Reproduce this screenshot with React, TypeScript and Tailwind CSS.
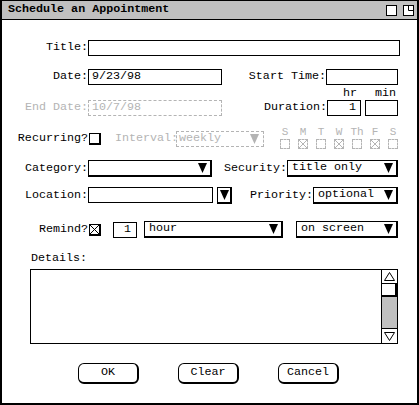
import React from "react";

function Tri({ gray }: { gray?: boolean }) {
  return (
    <svg width="9" height="10" viewBox="0 0 9 10" className="shrink-0">
      <polygon points="0,0 9,0 4.5,10" fill={gray ? "#b4b4b4" : "#000"} />
    </svg>
  );
}

function Drop({ w, text }: { w: string; text: string }) {
  return (
    <div className={`${w} h-[17px] flex items-center justify-between pl-[4px] pr-[3px] border border-black border-r-2 border-b-2 bg-white leading-none`}>
      <span>{text}</span>
      <Tri />
    </div>
  );
}

function Box({ x, gray }: { x?: boolean; gray?: boolean }) {
  if (gray) {
    return (
      <div className="w-[10px] h-[10px] border border-dashed border-[#b4b4b4] relative">
        {x && (
          <svg width="8" height="8" viewBox="0 0 8 8" className="absolute left-0 top-0">
            <line x1="0" y1="0" x2="8" y2="8" stroke="#b4b4b4" strokeWidth="1" />
            <line x1="8" y1="0" x2="0" y2="8" stroke="#b4b4b4" strokeWidth="1" />
          </svg>
        )}
      </div>
    );
  }
  return (
    <div className="w-[12px] h-[12px] border border-black border-r-2 border-b-2 relative bg-white">
      {x && (
        <svg width="9" height="9" viewBox="0 0 9 9" className="absolute left-0 top-0">
          <line x1="0" y1="0" x2="9" y2="9" stroke="#000" strokeWidth="1" />
          <line x1="9" y1="0" x2="0" y2="9" stroke="#000" strokeWidth="1" />
        </svg>
      )}
    </div>
  );
}

const days = [
  { l: "S", x: false },
  { l: "M", x: true },
  { l: "T", x: false },
  { l: "W", x: true },
  { l: "Th", x: false },
  { l: "F", x: true },
  { l: "S", x: false },
];

export default function App() {
  return (
    <div className="w-[419px] h-[405px] bg-white border-t border-x-2 border-b-2 border-black flex flex-col font-[family-name:'Liberation_Mono','Courier_New',monospace] text-[11.7px] text-black overflow-hidden">
      {/* title bar */}
      <div className="h-[19px] shrink-0 bg-[#c0c0c0] border-b border-black flex items-center justify-between pl-[6px] pr-[3px]">
        <span className="font-bold leading-none">Schedule an Appointment</span>
        <div className="flex items-center gap-[6px]">
          <svg width="11" height="11" viewBox="0 0 11 11">
            <rect x="0.5" y="0.5" width="10" height="10" fill="#fff" stroke="#000" />
          </svg>
          <svg width="11" height="11" viewBox="0 0 11 11">
            <rect x="0.5" y="0.5" width="10" height="10" fill="#fff" stroke="#000" />
            <polyline points="5.5,0.5 5.5,5.5 10.5,5.5" fill="none" stroke="#000" />
          </svg>
        </div>
      </div>

      {/* Title */}
      <div className="flex items-center h-[16px] mt-[20px]">
        <span className="w-[86px] text-right">Title:</span>
        <div className="w-[312px] h-[16px] border border-black" />
      </div>

      {/* Date / Start Time */}
      <div className="flex items-center h-[16px] mt-[13px]">
        <span className="w-[86px] text-right">Date:</span>
        <div className="w-[134px] h-[16px] border border-black flex items-center pl-[3px] leading-none">9/23/98</div>
        <span className="w-[104px] text-right">Start Time:</span>
        <div className="w-[72px] h-[16px] border border-black" />
      </div>

      {/* End Date / Duration */}
      <div className="flex items-end h-[26px] mt-[5px]">
        <span className="w-[86px] text-right text-[#b4b4b4] h-[16px] flex items-center justify-end">End Date:</span>
        <div className="w-[134px] h-[16px] border border-dashed border-[#b4b4b4] text-[#b4b4b4] flex items-center pl-[3px] leading-none">10/7/98</div>
        <span className="w-[105px] text-right h-[16px] flex items-center justify-end">Duration:</span>
        <div className="flex flex-col">
          <div className="flex h-[10px] items-end leading-none">
            <span className="w-[34px] text-right pr-[4px]">hr</span>
            <span className="w-[4px]" />
            <span className="w-[33px] text-right pr-[2px]">min</span>
          </div>
          <div className="flex gap-[4px]">
            <div className="w-[34px] h-[16px] border border-black flex items-center justify-end pr-[4px] leading-none">1</div>
            <div className="w-[33px] h-[16px] border border-black" />
          </div>
        </div>
      </div>

      {/* Recurring */}
      <div className="flex items-start h-[22px] mt-[11px]">
        <span className="w-[86px] text-right mt-[4px] h-[16px] flex items-center justify-end">Recurring?</span>
        <div className="ml-[1px] mt-[6px]">
          <Box />
        </div>
        <span className="ml-[14px] w-[61px] mt-[4px] h-[16px] flex items-center text-[#b4b4b4]">Interval:</span>
        <div className="w-[88px] h-[16px] mt-[4px] flex items-center justify-between pl-[2px] pr-[4px] border border-dashed border-[#b4b4b4] text-[#b4b4b4] leading-none">
          <span>weekly</span>
          <Tri gray />
        </div>
        <div className="flex gap-[8px] ml-[16px]">
          {days.map((d, i) => (
            <div key={i} className="w-[10px] flex flex-col items-center">
              <span className="h-[10px] leading-[10px] whitespace-nowrap text-[#b4b4b4] text-[11px]">{d.l}</span>
              <div className="mt-[2px]">
                <Box gray x={d.x} />
              </div>
            </div>
          ))}
        </div>
      </div>

      {/* Category / Security */}
      <div className="flex items-center h-[17px] mt-[11px]">
        <span className="w-[86px] text-right">Category:</span>
        <Drop w="w-[124px]" text="" />
        <span className="w-[75px] text-right">Security:</span>
        <Drop w="w-[111px]" text="title only" />
      </div>

      {/* Location / Priority */}
      <div className="flex items-center h-[17px] mt-[10px]">
        <span className="w-[86px] text-right">Location:</span>
        <div className="w-[125px] h-[16px] border border-black self-start" />
        <div className="ml-[4px] w-[15px] h-[17px] border border-black border-r-2 border-b-2 flex items-center justify-center">
          <Tri />
        </div>
        <span className="w-[81px] text-right">Priority:</span>
        <Drop w="w-[85px]" text="optional" />
      </div>

      {/* Remind */}
      <div className="flex items-center h-[17px] mt-[17px]">
        <span className="w-[86px] text-right">Remind?</span>
        <div className="ml-[1px]">
          <Box x />
        </div>
        <div className="ml-[12px] w-[24px] h-[16px] border border-black flex items-center justify-end pr-[5px] leading-none">1</div>
        <div className="ml-[7px]">
          <Drop w="w-[139px]" text="hour" />
        </div>
        <div className="ml-[13px]">
          <Drop w="w-[102px]" text="on screen" />
        </div>
      </div>

      {/* Details */}
      <div className="ml-[29px] mt-[14px] h-[12px] leading-[12px]">Details:</div>
      <div className="ml-[28px] mt-[5px] w-[368px] h-[75px] border border-black flex">
        <div className="flex-1" />
        <div className="w-[16px] h-full border-l border-black flex flex-col">
          <div className="h-[14px] flex items-center justify-center border-b border-black">
            <svg width="11" height="9" viewBox="0 0 11 9">
              <polygon points="5.5,0.5 10.5,8.5 0.5,8.5" fill="#fff" stroke="#000" />
            </svg>
          </div>
          <div className="h-[13px] bg-white border-b-2 border-r-2 border-black" />
          <div className="flex-1 bg-[#c0c0c0] border-b border-black" />
          <div className="h-[14px] flex items-center justify-center">
            <svg width="11" height="9" viewBox="0 0 11 9">
              <polygon points="0.5,0.5 10.5,0.5 5.5,8.5" fill="#fff" stroke="#000" />
            </svg>
          </div>
        </div>
      </div>

      {/* Buttons */}
      <div className="flex mt-[19px] ml-[76px]">
        <div className="w-[61px] h-[21px] rounded-[6px] border border-black border-r-2 border-b-2 flex items-center justify-center leading-none">OK</div>
        <div className="ml-[39px] w-[61px] h-[21px] rounded-[6px] border border-black border-r-2 border-b-2 flex items-center justify-center leading-none">Clear</div>
        <div className="ml-[39px] w-[61px] h-[21px] rounded-[6px] border border-black border-r-2 border-b-2 flex items-center justify-center leading-none">Cancel</div>
      </div>
    </div>
  );
}
